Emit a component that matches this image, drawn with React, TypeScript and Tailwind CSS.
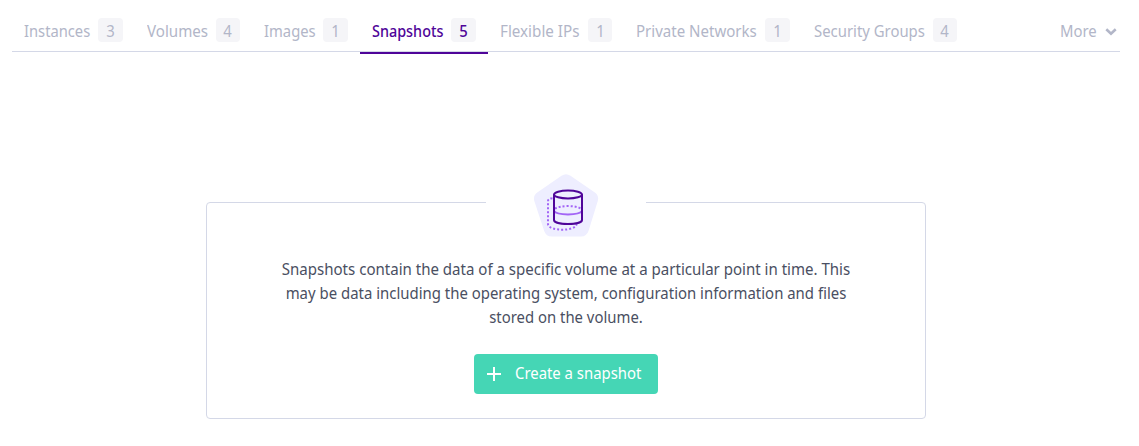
type Tab = { label: string; count: number; width: string; scale: string; active?: boolean };

const tabs: Tab[] = [
  { label: "Instances", count: 3, width: "w-[66.2px]", scale: "scale-x-[0.92]" },
  { label: "Volumes", count: 4, width: "w-[61.2px]", scale: "scale-x-[0.945]" },
  { label: "Images", count: 1, width: "w-[51px]", scale: "scale-x-[0.925]" },
  { label: "Snapshots", count: 5, width: "w-[71.7px]", scale: "scale-x-[0.9]", active: true },
  { label: "Flexible IPs", count: 1, width: "w-[80.4px]", scale: "scale-x-[0.95]" },
  { label: "Private Networks", count: 1, width: "w-[120.8px]", scale: "scale-x-[0.94]" },
  { label: "Security Groups", count: 4, width: "w-[111.1px]", scale: "scale-x-[0.93]" },
];

function TabItem({ label, count, width, scale, active }: Tab) {
  return (
    <a
      className={`flex h-[46px] shrink-0 items-start gap-2 border-b-2 px-3 pt-[11px] ${
        active ? "border-[#4f0599] font-medium text-[#4f0599]" : "border-transparent text-[#b2b6c8]"
      }`}
    >
      <span className={`block whitespace-nowrap ${width}`}>
        <span className={`inline-block origin-left ${scale}`}>{label}</span>
      </span>
      <span className="-mt-px h-6 w-[24.4px] rounded bg-[#f5f5f8] pt-px text-center">
        <span className="inline-block scale-x-[0.93]">{count}</span>
      </span>
    </a>
  );
}

function SnapshotIcon() {
  return (
    <svg width="66" height="64" viewBox="0 0 66 64" fill="none">
      <path
        d="M28.5 1.700a8 8 0 0 1 9 0L61.500 18.200a8 8 0 0 1 3.200 9L55.500 57a8 8 0 0 1-7.500 5.500H18.800a8 8 0 0 1-7.600-5.500L1.400 27.300a8 8 0 0 1 3.200-9Z"
        fill="#eeeeff"
      />
      <path
        d="M19.500 24.200c-3 .3-4.500 1-4.500 3V50c0 7.600 28.500 7.600 28.500 0"
        stroke="#a365f6"
        strokeWidth="2"
        strokeDasharray="2 2"
      />
      <path d="M22 34.700c5-3.500 21-3.500 26 0" stroke="#a365f6" strokeWidth="2" strokeDasharray="2 2" />
      <path d="M21 37c3 4.500 25 4.500 28 0" stroke="#a365f6" strokeWidth="2" />
      <ellipse cx="35" cy="20.500" rx="14" ry="4" stroke="#4f0599" strokeWidth="2" />
      <path d="M21 20.500V46c0 5.300 28 5.300 28 0V20.500" stroke="#4f0599" strokeWidth="2" />
    </svg>
  );
}

export default function App() {
  return (
    <div className="h-[446px] w-[1139px] bg-white font-['Noto_Sans',sans-serif] text-base leading-6">
      <div className="px-3 pt-2">
        <nav className="flex h-11 w-[1108px] border-b border-[#d4d8e7]">
          {tabs.map((tab) => (
            <TabItem key={tab.label} {...tab} />
          ))}
          <a className="ml-auto flex items-start pt-[11px] pr-[3px] text-[#b2b6c8]">
            <span className="w-[45px]">
              <span className="inline-block origin-left scale-x-[0.93]">More</span>
            </span>
            <svg className="mt-[9px]" width="12" height="8" viewBox="0 0 12 8" fill="none">
              <path d="m1.300 1.300 4.700 4.500 4.700-4.500" stroke="#b2b6c8" strokeWidth="2.600" />
            </svg>
          </a>
        </nav>
      </div>

      <section className="ml-[206px] mt-[150px] h-[217px] w-[720px] rounded border border-[#d4d8e7]">
        <div className="mx-auto -mt-[29px] flex h-[64px] w-40 justify-center bg-white">
          <SnapshotIcon />
        </div>
        <p className="-mx-10 mt-[19px] text-center text-[#4a4f62]">
          <span className="block scale-x-[0.94]">
            Snapshots contain the data of a specific volume at a particular point in time. This
          </span>
          <span className="block scale-x-[0.933]">
            may be data including the operating system, configuration information and files
          </span>
          <span className="block scale-x-[0.93]">stored on the volume.</span>
        </p>
        <button className="mx-auto mt-[25px] flex h-10 w-[184px] items-center rounded bg-[#45d6b5] pl-[13px] text-white">
          <svg width="14" height="14" viewBox="0 0 14 14">
            <path d="M7 0v14M0 7h14" stroke="white" strokeWidth="2" />
          </svg>
          <span className="-mt-0.5 ml-[14px] origin-left scale-x-[0.93] whitespace-nowrap">Create a snapshot</span>
        </button>
      </section>
    </div>
  );
}
